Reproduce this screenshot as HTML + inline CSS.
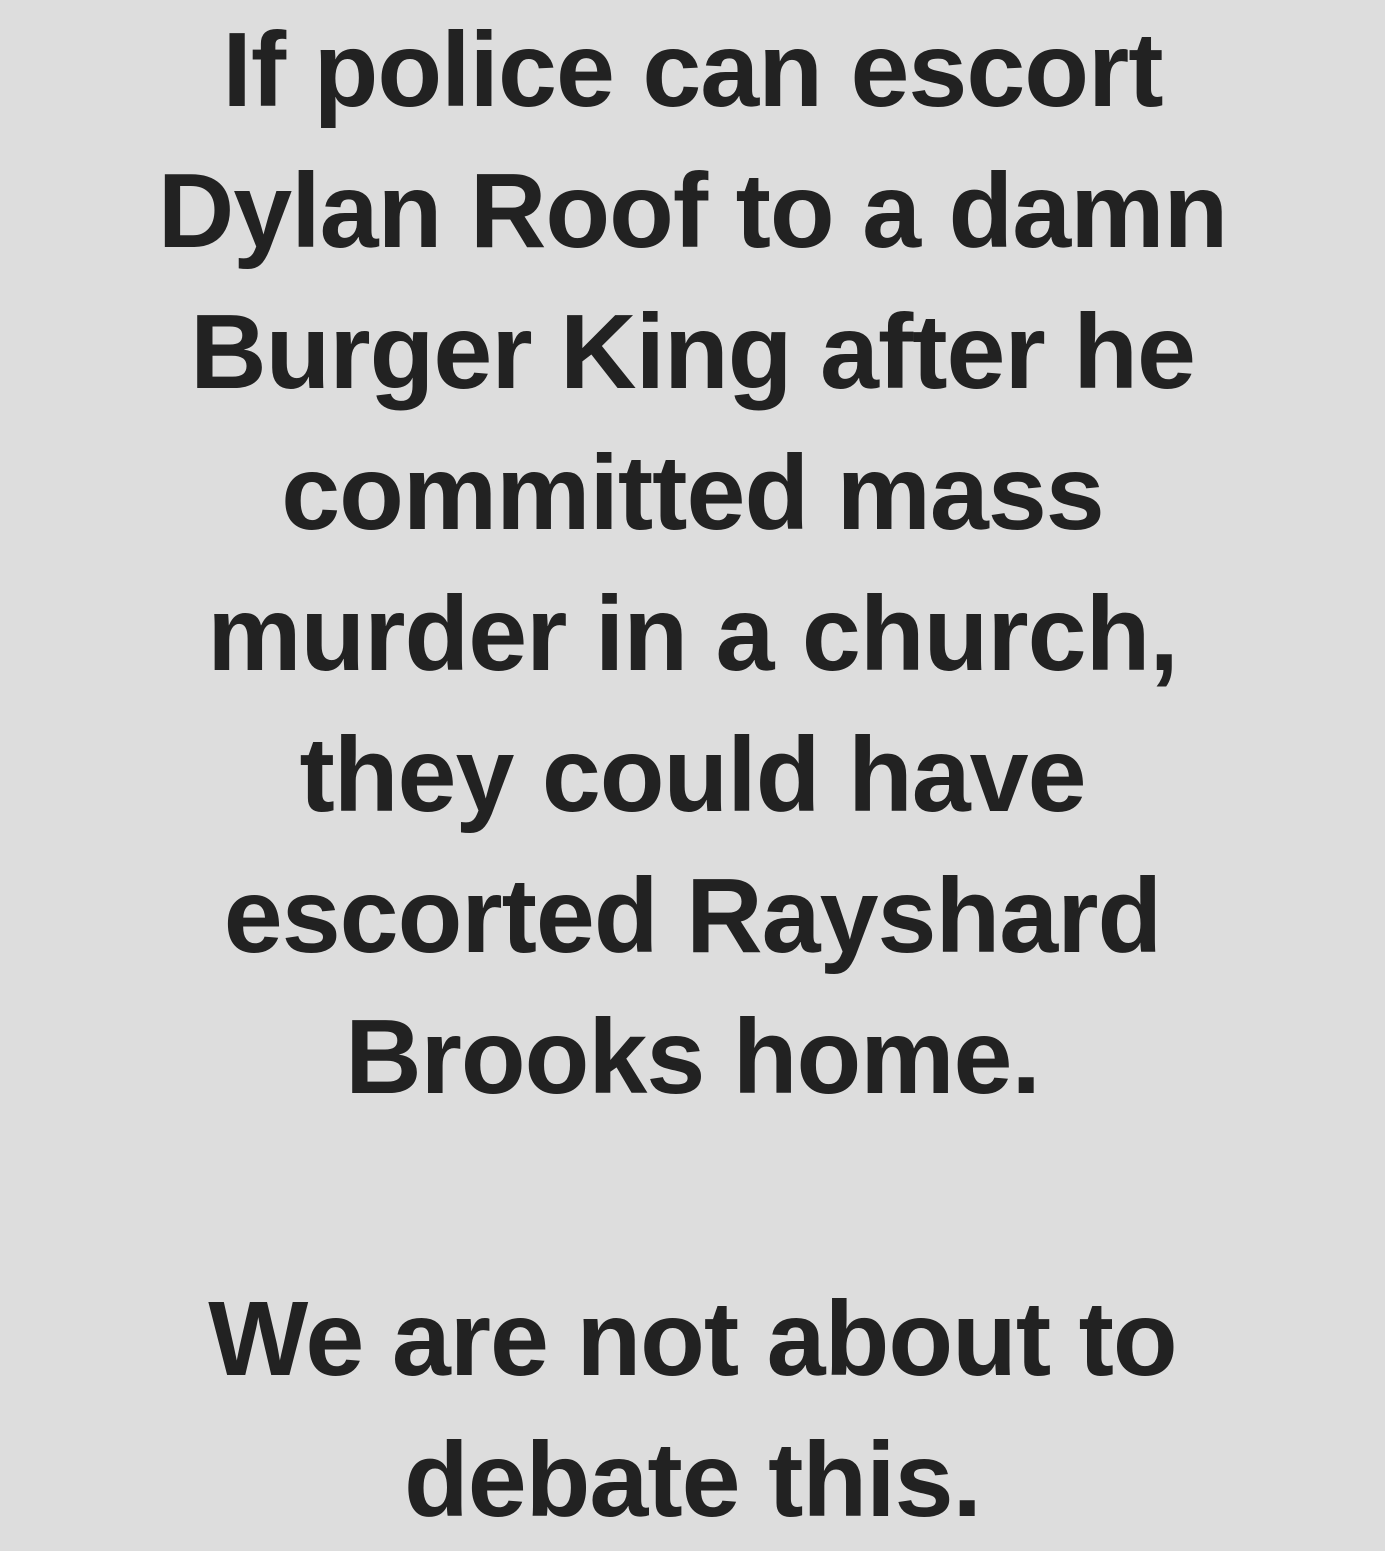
<!DOCTYPE html>
<html><head><meta charset="utf-8"><style>
html,body{margin:0;padding:0;}
body{width:1385px;height:1545px;background:#dddddd;overflow:hidden;position:relative;}
.t{position:absolute;left:0;top:0px;width:1385px;text-align:center;font-family:"Liberation Sans",Arial,sans-serif;font-weight:bold;font-size:106px;line-height:141px;color:#222;letter-spacing:-1px;}
</style></head><body>
<div class="t">If police can escort<br>Dylan Roof to a damn<br>Burger King after he<br>committed mass<br>murder in a church,<br>they could have<br>escorted Rayshard<br>Brooks home.<br><br>We are not about to<br>debate this.</div>
</body></html>
